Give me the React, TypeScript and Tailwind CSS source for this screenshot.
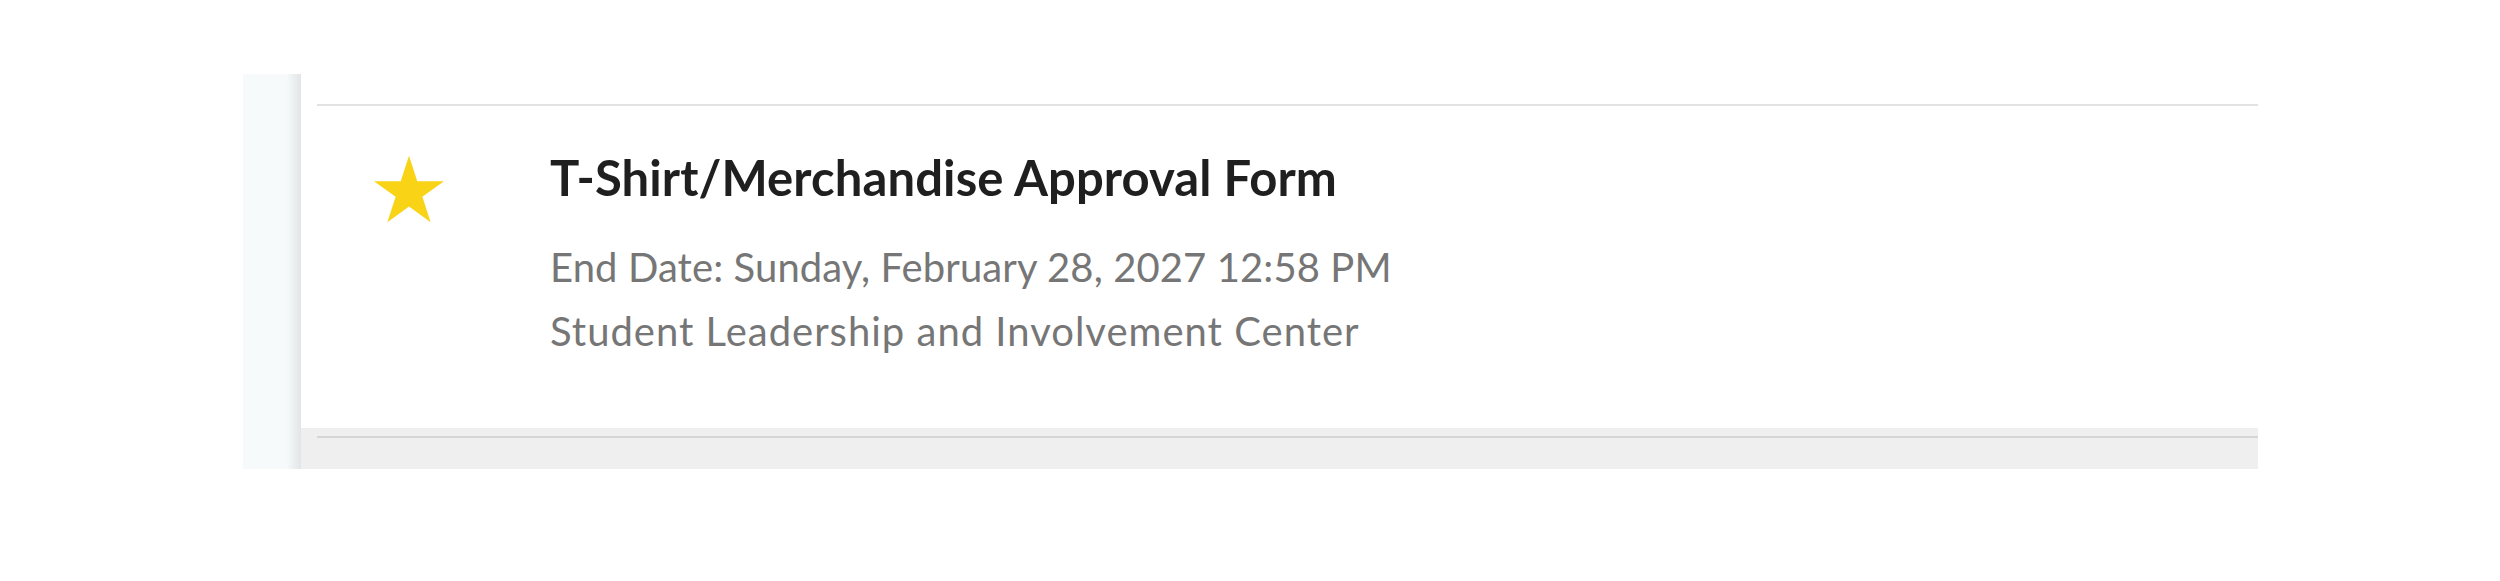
import React from "react"

const Star: React.FC<{ className?: string }> = props => (
  <svg viewBox="2.45 0 95.1 90.45" className={props.className}>
    <polygon
      fill="currentColor"
      points="50,0 61.23,34.55 97.55,34.55 68.16,55.9 79.39,90.45 50,69.1 20.61,90.45 31.84,55.9 2.45,34.55 38.77,34.55"
    />
  </svg>
)

export default function App() {
  return (
    <div className="min-h-[581px] bg-white pt-[74px] pl-[243px] font-['Source_Sans_Pro','Lato',sans-serif]">
      <div className="flex w-[2015px]">
        <div className="w-[58px] shrink-0 bg-linear-to-r from-[#f6fafb] from-75% to-[#e2e5e7]" />
        <div className="flex-1">
          <div className="bg-white pt-[30px]">
            <div className="ml-[16px] h-[2px] bg-[#e2e2e2]" />
            <div className="flex pb-[65px]">
              <Star className="ml-[73px] mt-[49px] h-[68px] w-[70px] shrink-0 text-[#f8d316]" />
              <div className="ml-[106px]">
                <h1 className="mt-[45px] text-[49px] font-bold leading-[52px] tracking-[0.1px] text-[#1f1f1f]">
                  T-Shirt/Merchandise Approval Form
                </h1>
                <div className="mt-[32px] text-[40px] leading-[64px] text-[#767676]">
                  <p className="tracking-[0.1px]">End Date: Sunday, February 28, 2027 12:58 PM</p>
                  <p className="tracking-[1px]">Student Leadership and Involvement Center</p>
                </div>
              </div>
            </div>
          </div>
          <div className="h-[41px] bg-[#efefef] pt-[8px]">
            <div className="ml-[16px] h-[2px] bg-[#d6d6d6]" />
          </div>
        </div>
      </div>
    </div>
  )
}
